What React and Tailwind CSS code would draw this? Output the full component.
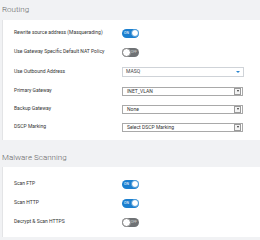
const font = { fontFamily: "Roboto, 'Liberation Sans', sans-serif" };

const Toggle = ({ on }) =>
  on ? (
    <div className="relative w-[17px] h-[9px] rounded-full bg-[#1b7fcf]">
      <span className="absolute left-[2px] top-[2.5px] text-[3.5px] leading-[4px] text-white">ON</span>
      <span className="absolute right-[0.5px] top-[0.5px] w-[8px] h-[8px] rounded-full bg-white border border-[#4a9ad8]" />
    </div>
  ) : (
    <div className="relative w-[17px] h-[9px] rounded-full bg-[#6f7275]">
      <span className="absolute right-[2px] top-[2.5px] text-[3.5px] leading-[4px] text-[#d5d5d5]">OFF</span>
      <span className="absolute left-[0px] top-[0px] w-[9px] h-[9px] rounded-full bg-white border border-[#8a8a8a]" />
    </div>
  );

const Select = ({ value }) => (
  <div className="flex items-center w-[121px] h-[9px] border border-[#a9a9a9] bg-white">
    <span className="flex-1 pl-[4px] text-[5px] leading-[7px] text-[#333]">{value}</span>
    <span className="flex items-center justify-center w-[7px] h-[7px] mr-[1px] border border-[#9a9a9a] bg-[#f3f3f3]">
      <span className="w-0 h-0 border-l-[1.5px] border-r-[1.5px] border-t-[2px] border-l-transparent border-r-transparent border-t-[#333]" />
    </span>
  </div>
);

const Row = ({ label, h, children }) => (
  <div className={`flex items-center ${h}`}>
    <div className="w-[119px] pl-[11px] text-[5px] text-[#333] whitespace-nowrap">{label}</div>
    {children}
  </div>
);

export default function App() {
  return (
    <div className="w-[260px] h-[240px] overflow-hidden bg-[#f1f2f4]" style={font}>
      <div className="h-[20px] flex items-center pl-[2px] text-[8px] text-[#666] font-light">Routing</div>
      <div className="ml-[2px] bg-white border-l border-[#e3e4e6] pt-[4px] pb-[4px]">
        <Row label="Rewrite source address (Masquerading)" h="h-[18px]"><Toggle on /></Row>
        <Row label="Use Gateway Specific Default NAT Policy" h="h-[20px]"><Toggle /></Row>
        <Row label="Use Outbound Address" h="h-[20px]">
          <div className="flex items-center w-[122px] h-[10px] border border-[#cfd3d8] bg-white">
            <span className="flex-1 pl-[3px] text-[5px] text-[#444]">MASQ</span>
            <span className="mr-[3px] w-0 h-0 border-l-[2px] border-r-[2px] border-t-[2px] border-l-transparent border-r-transparent border-t-[#2a85d0]" />
          </div>
        </Row>
        <Row label="Primary Gateway" h="h-[18px]"><Select value="INET_VLAN" /></Row>
        <Row label="Backup Gateway" h="h-[18px]"><Select value="None" /></Row>
        <Row label="DSCP Marking" h="h-[18px]"><Select value="Select DSCP Marking" /></Row>
      </div>
      <div className="mt-[8px] h-[19px] flex items-center pl-[2px] text-[8px] text-[#666] font-light">Malware Scanning</div>
      <div className="ml-[2px] bg-white border-l border-[#e3e4e6] pt-[8px] pb-[6px]">
        <Row label="Scan FTP" h="h-[18px]"><Toggle on /></Row>
        <Row label="Scan HTTP" h="h-[20px]"><Toggle on /></Row>
        <Row label="Decrypt & Scan HTTPS" h="h-[18px]"><Toggle /></Row>
      </div>
    </div>
  );
}
